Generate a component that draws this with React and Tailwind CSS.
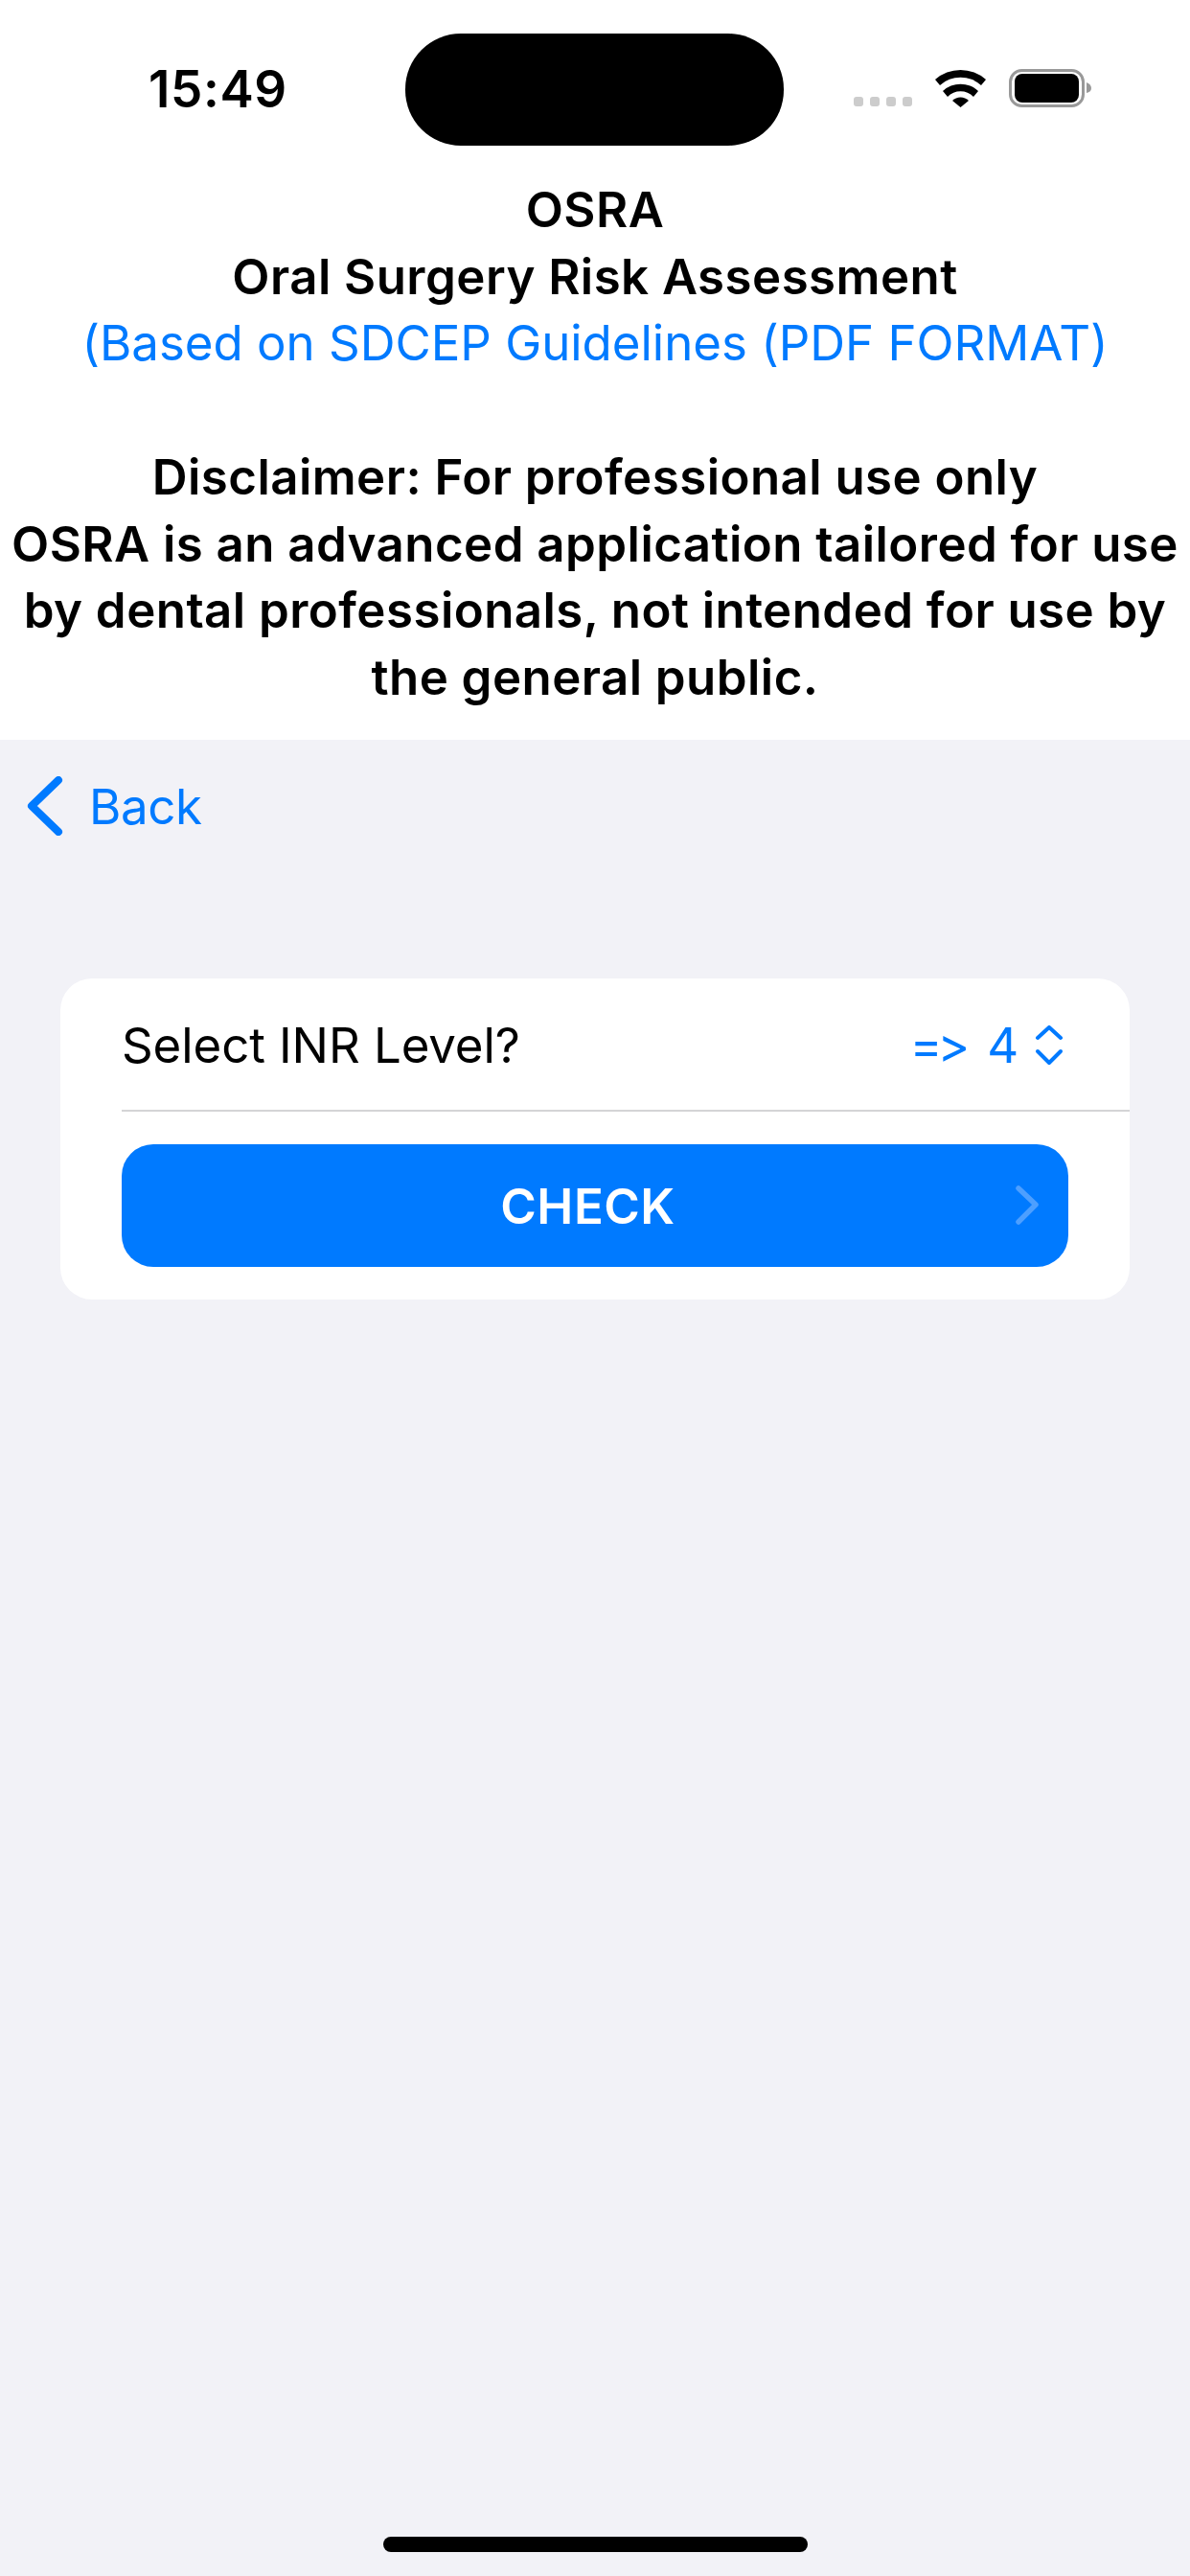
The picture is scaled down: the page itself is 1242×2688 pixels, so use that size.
import React from "react";

const font = "font-['Inter','Liberation_Sans',sans-serif]";

// status bar glyphs
const Wifi = () => (
  <svg width="53" height="40" viewBox="0 0 53 40" fill="#000">
    <path d="M0 11 A40 40 0 0 1 53 11 L48 17 A32 32 0 0 0 5 17 Z" />
    <path d="M8 23 A27 27 0 0 1 45 23 L40 29 A19 19 0 0 0 13 29 Z" />
    <path d="M18 33 A12 12 0 0 1 35 33 L26.5 40 Z" />
  </svg>
);

const Battery = () => (
  <svg width="86" height="40" viewBox="0 0 86 40">
    <rect x="1.5" y="1.5" width="76" height="37" rx="12" fill="none" stroke="#999" strokeWidth="3" />
    <rect x="6" y="5" width="67" height="30" rx="8" fill="#000" />
    <path d="M81 14 Q86 16 86 20 Q86 24 81 25 Z" fill="#999" />
  </svg>
);

const StatusBar = () => (
  <div className="flex h-[184px] items-start">
    <div className="w-[423px] pt-[61px] pl-[155px] text-[53px] leading-[64px] font-semibold tracking-[0.6px] text-black">
      15:49
    </div>
    <div className="mt-[35px] h-[117px] w-[395px] rounded-[58px] bg-black"></div>
    <div className="flex items-end pt-[72px] pl-[73px]">
      <div className="mb-[1px] flex gap-[7px]">
        {[0, 1, 2, 3].map((i) => (
          <div key={i} className="h-[10px] w-[10px] rounded-[3px] bg-[#cccccc]"></div>
        ))}
      </div>
      <div className="ml-[24px]">
        <Wifi />
      </div>
      <div className="ml-[24px]">
        <Battery />
      </div>
    </div>
  </div>
);

const App = () => {
  return (
    <div className={`flex h-[2688px] w-[1242px] flex-col overflow-hidden bg-[#f2f2f7] ${font}`}>
      <header className="bg-white pb-[30px]">
        <StatusBar />
        <div className="text-center text-[51px] leading-[69.7px] font-semibold tracking-[0.45px] text-black">
          <p>OSRA</p>
          <p>Oral Surgery Risk Assessment</p>
          <p className="font-normal tracking-[-0.03px] text-[#007aff]">(Based on SDCEP Guidelines (PDF FORMAT)</p>
          <p>&nbsp;</p>
          <p>Disclaimer: For professional use only</p>
          <p>OSRA is an advanced application tailored for use</p>
          <p>by dental professionals, not intended for use by</p>
          <p>the general public.</p>
        </div>
      </header>

      <div className="flex h-[138px] items-center pl-[28px] text-[51px] tracking-[-0.4px] text-[#007aff]">
        <svg width="38" height="62" viewBox="0 0 38 62" fill="none" stroke="#007aff" strokeWidth="8" strokeLinecap="round" strokeLinejoin="round">
          <polyline points="33,4 5,31 33,58" />
        </svg>
        <span className="ml-[27px] pt-[3px]">Back</span>
      </div>

      <div className="mx-[63px] mt-[111px] rounded-[33px] bg-white pl-[64px]">
        <div className="flex h-[139px] items-center justify-between border-b-2 border-[#d4d4d6] pt-[4px] pr-[68px] text-[51px] tracking-[-0.1px]">
          <span className="text-black">Select INR Level?</span>
          <span className="flex items-center text-[#007aff]">
            <span className="tracking-[-5px]">=&gt;</span>
            <span className="ml-[23px]">4</span>
            <svg className="ml-[16px]" width="32" height="42" viewBox="0 0 32 42" fill="none" stroke="#007aff" strokeWidth="4" strokeLinecap="round" strokeLinejoin="round">
              <polyline points="4,13 16,2 28,13" />
              <polyline points="4,27 16,39 28,27" />
            </svg>
          </span>
        </div>
        <div className="pt-[34px] pr-[64px] pb-[34px]">
          <div className="flex h-[128px] items-center rounded-[33px] bg-[#007aff] pr-[31px] pl-[40px]">
            <span className="flex-1 pt-[3px] text-center text-[51px] font-semibold tracking-[0.5px] text-white">CHECK</span>
            <svg width="24" height="42" viewBox="0 0 24 42" fill="none" stroke="#4d9fff" strokeWidth="5.5" strokeLinecap="round" strokeLinejoin="round">
              <polyline points="3,3 21,20 3,38" />
            </svg>
          </div>
        </div>
      </div>

      <div className="mt-auto mb-[25px] h-[16px] w-[443px] self-center rounded-full bg-black"></div>
    </div>
  );
};

export default App;
